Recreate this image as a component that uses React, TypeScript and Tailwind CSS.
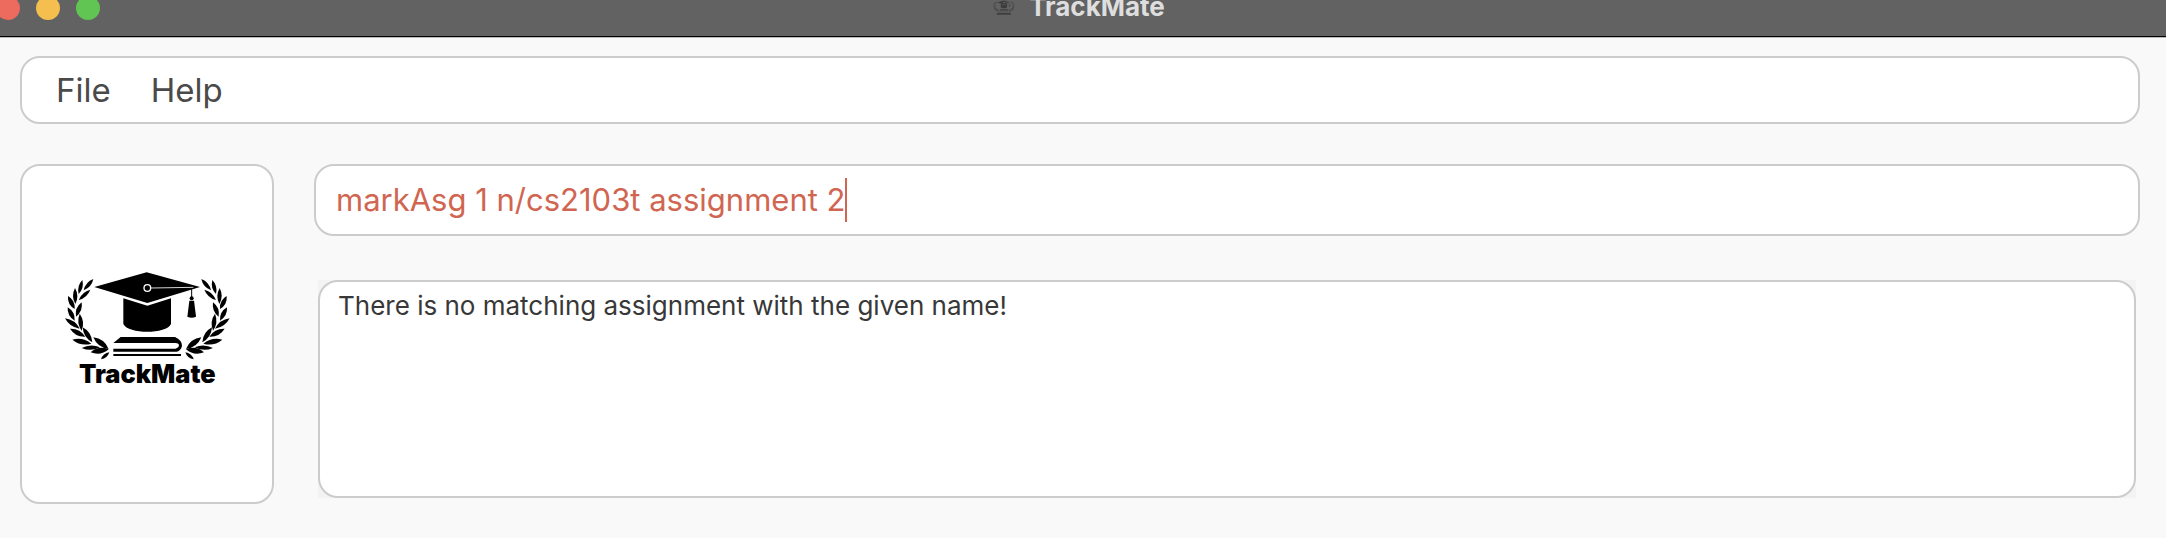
import { useState } from "react";

type Leaf = [tipX: number, tipY: number, baseX: number, baseY: number, width: number];

const LEAVES: Leaf[] = [
  [130, 58, 101, 92, 12],
  [97, 61, 86, 103, 12],
  [121, 90, 86, 121, 12],
  [75, 85, 76, 133, 13],
  [54, 109, 74, 148, 14],
  [95, 128, 78, 171, 14],
  [53, 143, 74, 183, 14],
  [89, 162, 95, 213, 14],
  [45, 176, 89, 207, 14],
  [60, 207, 106, 231, 15],
  [98, 203, 127, 248, 15],
  [67, 240, 124, 252, 15],
  [95, 265, 150, 263, 13],
  [130, 233, 176, 268, 17],
  [122, 278, 176, 269, 17],
  [153, 299, 178, 278, 10],
];

function leafPath([tx, ty, bx, by, w]: Leaf) {
  const dx = bx - tx;
  const dy = by - ty;
  const len = Math.hypot(dx, dy);
  const nx = (-dy / len) * w;
  const ny = (dx / len) * w;
  const mx = (tx + bx) / 2;
  const my = (ty + by) / 2;
  return `M${tx} ${ty}Q${mx + nx} ${my + ny} ${bx} ${by}Q${mx - nx} ${my - ny} ${tx} ${ty}Z`;
}

function Emblem() {
  const branch = LEAVES.map((leaf, i) => <path key={i} d={leafPath(leaf)} />);
  return (
    <>
      <g>{branch}</g>
      <g transform="translate(584 0) scale(-1 1)">{branch}</g>
      <path d="M133 82L290 38L450 82L292 130Z" />
      <path d="M220 116L292 138L363 116V193C350 224 234 224 220 193Z" />
      <circle cx="292" cy="85" r="10" fill="none" stroke="#fff" strokeWidth="4" />
      <path d="M302 85L430 83" stroke="#fff" strokeWidth="2.5" />
      <path d="M425 88V112" stroke="currentColor" strokeWidth="3" />
      <circle cx="425" cy="116" r="6" />
      <path d="M418 123H432L438 171Q425 177 412 171Z" />
      <path d="M190 250L212 232H375Q396 242 396 258Q394 272 380 276H190V267H376Q387 264 387 257Q386 250 376 250Z" />
      <path d="M190 283H393V289H190Z" />
    </>
  );
}

function Logo() {
  return (
    <svg viewBox="42 34 504 360" className="h-[120px] w-[168px] text-black" fill="currentColor" role="img" aria-label="TrackMate logo">
      <Emblem />
      <text x="292" y="370" textAnchor="middle" fontSize="76" fontWeight="900" fontFamily="Inter, sans-serif">
        TrackMate
      </text>
    </svg>
  );
}

function TitleBar() {
  return (
    <header className="border-b border-[#bbbbbb] bg-[#626262]">
      <div className="flex h-[37px] items-start overflow-hidden border-b border-black">
        <div className="-mt-1 grid grow grid-cols-[1fr_auto_1fr] pr-2">
          <div className="-ml-1 flex gap-4">
            <button aria-label="Close" className="size-6 rounded-full bg-[#ed6a5e]" />
            <button aria-label="Minimize" className="size-6 rounded-full bg-[#f5bf4f]" />
            <button aria-label="Zoom" className="size-6 rounded-full bg-[#61c554]" />
          </div>
          <div className="flex items-start gap-3.5">
            <svg viewBox="42 34 504 348" className="mt-1 h-4 w-[22px] text-[#3c3c3c]" fill="currentColor" aria-hidden="true">
              <Emblem />
              <path d="M130 320H455V360H130Z" />
            </svg>
            <h1 className="text-[26px]/[22px] font-bold text-[#dedede]">TrackMate</h1>
          </div>
        </div>
      </div>
    </header>
  );
}

export default function App() {
  const [command, setCommand] = useState("markAsg 1 n/cs2103t assignment 2");
  return (
    <div className="min-h-screen bg-[#f9f9f9] font-['Inter',sans-serif]">
      <TitleBar />
      <div className="flex flex-col gap-10 pt-[18px] pr-[26px] pb-[34px] pl-5">
        <nav className="flex h-[68px] items-center gap-10 rounded-[20px] border-2 border-[#cccccc] bg-white px-[34px] text-[33px]/10 text-[#4a4a4a]">
          <button>File</button>
          <button>Help</button>
        </nav>
        <main className="flex gap-10">
          <aside className="flex w-[254px] shrink-0 items-center justify-center rounded-[20px] border-2 border-[#cccccc] bg-white pb-1.5 pl-0.5">
            <Logo />
          </aside>
          <div className="flex grow flex-col gap-11 pb-1.5">
            <label className="flex h-[72px] items-center rounded-[20px] border-2 border-[#cccccc] bg-white px-5 text-[31px]/10 text-[#d06651]">
              <input
                aria-label="Command"
                className="field-sizing-content caret-transparent outline-none"
                value={command}
                onChange={(e) => setCommand(e.target.value)}
              />
              <span className="h-11 w-0.5 bg-[#d06651]" />
            </label>
            <div className="mr-1 ml-1 flex bg-[#f3f3f3]">
              <textarea
                aria-label="Result"
                readOnly
                className="h-[218px] grow resize-none rounded-[20px] border-2 border-[#cccccc] bg-white px-[18px] py-1.5 text-[26px]/9 text-[#383838] outline-none"
                value="There is no matching assignment with the given name!"
              />
            </div>
          </div>
        </main>
      </div>
    </div>
  );
}
